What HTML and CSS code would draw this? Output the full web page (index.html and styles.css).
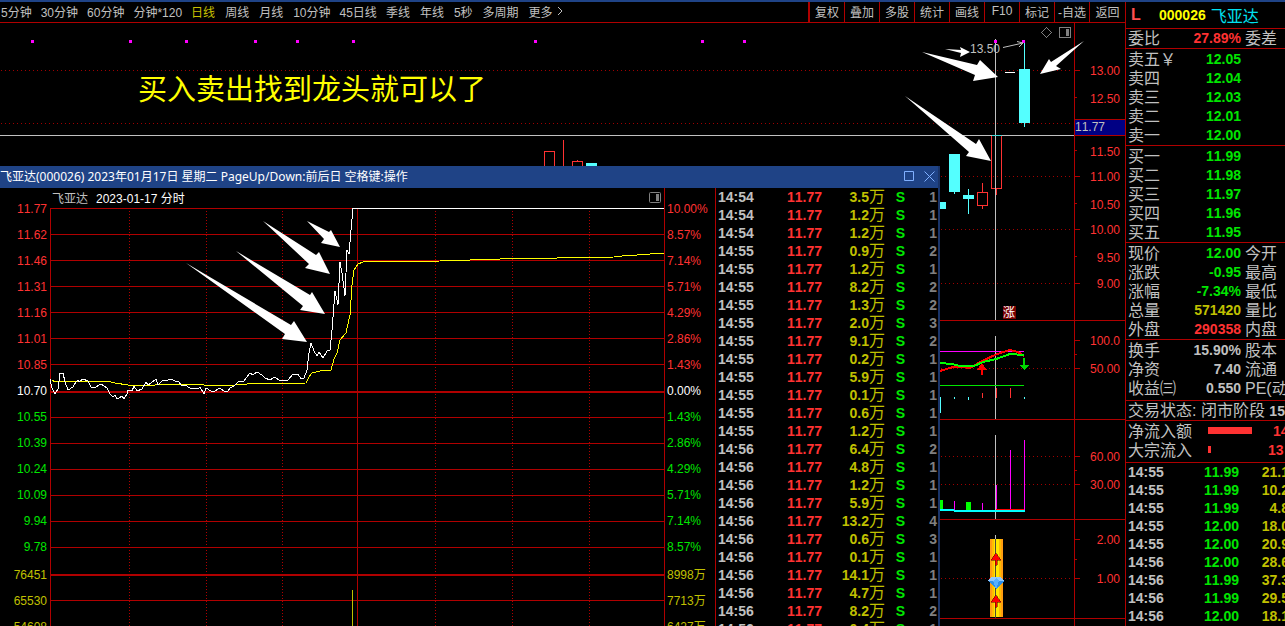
FILE: index.html
```html
<!DOCTYPE html>
<html lang="zh-CN">
<head>
<meta charset="utf-8">
<title>飞亚达 000026</title>
<link rel="stylesheet" href="styles.css">
</head>
<body>
<div class="app">
<main class="main">
  <nav class="toolbar">
    <div class="periods">
      <button class="tab wide">5分钟</button><button class="tab wide">30分钟</button><button class="tab wide">60分钟</button><button class="tab wide">分钟*120</button><button class="tab active">日线</button><button class="tab">周线</button><button class="tab">月线</button><button class="tab wide">10分钟</button><button class="tab wide">45日线</button><button class="tab">季线</button><button class="tab">年线</button><button class="tab">5秒</button><button class="tab">多周期</button><button class="tab more">更多<svg width="6" height="10" viewBox="0 0 6 10"><path d="M1 1l4 4-4 4" fill="none" stroke="#c0c0c0"/></svg></button>
    </div>
    <div class="tools">
      <button>复权</button><button>叠加</button><button>多股</button><button>统计</button><button>画线</button><button>F10</button><button>标记</button><button>-自选</button><button>返回</button>
    </div>
  </nav>
  <section class="stage">
    <svg class="kline" viewBox="0 23 1125 603" preserveAspectRatio="xMaxYMin slice">
      <g class="dots">
        <path d="M1 70.5H1072M1 123.5H1072M1 176.5H1072M1 229.5H1072M1 283.5H1072M1 368.5H1072M1 456.5H1072M1 484.5H1072M1 578.5H1072"/>
      </g>
      <path class="grid" d="M1074.5 23V626M940 320.5H1125M940 419.5H1125M940 519.5H1125M940 618.5H1125M1075 70.5h5M1075 97.5h2M1075 150.5h2M1075 176.5h5M1075 203.5h2M1075 229.5h5M1075 256.5h2M1075 283.5h5M1075 340.5h5M1075 354.5h2M1075 368.5h5M1075 456.5h5M1075 470.5h2M1075 484.5h5M1075 539.5h5M1075 559.5h2M1075 578.5h5"/>
      <path class="mark" d="M31 40h3v3h-3zM129 40h3v3h-3zM185 40h3v3h-3zM254 40h3v3h-3zM296 40h3v3h-3zM352 40h3v3h-3zM534 40h3v3h-3zM701 40h3v3h-3zM743 40h3v3h-3z"/>
      <path class="up" d="M544.5 167V151.5h10V167M563.5 140V167M572.5 167V161.5h10V167M577.5 160v1M982.5 183v9M977.5 192.5h10v13h-10zM982.5 206v3M991.5 136v52.500h10V136M996.5 189v6"/>
      <path class="down" d="M586 163h11v4h-11zM949 154h11v38h-11zM954 192h1v2h-1zM940 202h6v7h-6zM963 195h11v4h-11zM968 189h1v25h-1zM1019 69h11v54h-11zM1024 42h1v85h-1z"/>
      <text class="peak" x="970" y="53">13.50</text>
      <path class="cross" d="M0 135.500H1074M995.500 39V320M995.500 336V419M995.500 435V519M995.500 535V618"/>
      <path d="M992 135.500h10" stroke="#40d8d8"/>
      <path class="white" d="M1005 72.500h10"/>
      <path class="mark" d="M994 40h3v3h-3zM1022 40h3v3h-3z"/>
      <path class="pointer" d="M1003 47.500L1023 43M1017 41.500L1023 43 1019 47"/>
      <path d="M1046.500 27.500l5 5-5 5-5-5z" fill="none" stroke="#808080"/>
      <rect x="1059.500" y="27.500" width="11" height="10" rx="1" fill="none" stroke="#808080"/><path d="M1066 29h3v7h-3z" fill="#808080"/>
      <rect x="1075" y="119" width="50" height="17" fill="#000084"/>
      <path class="grid" d="M1075 119.500h50M1075 135.500h50"/>
      <g class="ticks">
        <text x="1120" y="75">13.00</text><text x="1120" y="103">12.50</text><text x="1120" y="156">11.50</text><text x="1120" y="181">11.00</text><text x="1120" y="209">10.50</text><text x="1120" y="234">10.00</text><text x="1120" y="262">9.50</text><text x="1120" y="288">9.00</text><text x="1120" y="345">100.0</text><text x="1120" y="373">50.00</text><text x="1120" y="461">60.00</text><text x="1120" y="489">30.00</text><text x="1120" y="544">2.00</text><text x="1120" y="583">1.00</text>
      </g>
      <text class="peak" x="1075" y="131">11.77</text>
      <g class="arrows">
        <path d="M922 52L977 65 980 60 998 77 973 81 975 75z"/>
        <path d="M945 49L961 50 960 47 970 52 960 57 961 53z"/>
        <path d="M1040 74L1049 59 1051 62 1084 41 1056 66 1061 69z"/>
        <path d="M905 96L976 144 979 139 991 161 966 156 969 152z"/>
      </g>
      <rect x="1003" y="306" width="13" height="13" fill="#780000"/>
      <text class="badge" x="1009" y="317">涨</text>
      <path d="M940 351.500h84" stroke="#f0f"/><path d="M940 385.500h84" stroke="#00e600"/>
      <path class="thick" stroke="#f00" d="M940 371L953 367 962 367 970 368 982 361 995 355 1003 352 1010 350 1018 352 1024 356"/>
      <path class="thick" stroke="#0f0" d="M940 363L952 364 960 366 974 366 983 362 996 359 1010 354 1024 355"/>
      <path fill="#f00" d="M982 363l5 7h-4v5h-2v-5h-4z"/>
      <path fill="#00d800" d="M1023 358h2v7h4l-5 5-5-5h4z"/>
      <path stroke="#54ffff" d="M940.500 397v16M954.500 397v2M968.500 397v3M1024.500 397v2"/>
      <path class="up" d="M982.500 393v5M996.500 388v10M1010.500 388v10"/>
      <path fill="#0f0" d="M940 500h3v11h-3zM966 502h5v8h-5z"/>
      <path stroke="#f0f" d="M954.500 501v9M982.500 503v7M996.500 485v25M1010.500 450v60M1024.500 440v70"/>
      <path stroke="#f00" d="M996 509.500h28"/>
      <path fill="#0ff" d="M940 509h14v1h71v2h-71v-1h-14z"/>
      <rect x="990" y="539" width="13" height="78" fill="#ff9c10"/><rect x="992" y="539" width="9" height="78" fill="#ffbc00"/><rect x="994" y="539" width="5" height="78" fill="#ffe800"/>
      <path class="cross" d="M995.500 535V539"/><path d="M995.500 539V618" stroke="#504838"/>
      <path fill="#f00" stroke="#400" stroke-width=".500" d="M996 553l5 7h-4v5h-2v-5h-4zM996 595l5 7h-4v5h-2v-5h-4z"/>
      <path d="M991 577h10l3 4-8 8-8-8z" fill="#2f8fe8"/><path d="M991 577h10l3 4h-16z" fill="#8fc8ff"/><path d="M993 581l3 8 3-8-3-3z" fill="#58b0ff"/>
    </svg>
    <p class="slogan">买入卖出找到龙头就可以了</p>
    <section class="dialog">
      <header class="dialog-bar">
        <h1>飞亚达(000026) 2023年01月17日 星期二 PageUp/Down:前后日 空格键:操作</h1>
        <button aria-label="最大化"><svg width="11" height="11" viewBox="0 0 11 11"><path d="M.5 .5h9v9h-9z" fill="none" stroke="#80b0ff"/></svg></button>
        <button aria-label="关闭"><svg width="11" height="11" viewBox="0 0 11 11"><path d="M.5 .5l10 10M10.500 .5l-10 10" fill="none" stroke="#80b0ff"/></svg></button>
      </header>
      <div class="dialog-body">
        <div class="scale left">
          <span>11.77</span><span>11.62</span><span>11.46</span><span>11.31</span><span>11.16</span><span>11.01</span><span>10.85</span><span class="zero">10.70</span><span class="neg">10.55</span><span class="neg">10.39</span><span class="neg">10.24</span><span class="neg">10.09</span><span class="neg">9.94</span><span class="neg">9.78</span><span class="vol first">76451</span><span class="vol">65530</span><span class="vol">54608</span>
        </div>
        <div class="plot">
          <div class="plot-head"><span class="name">飞亚达</span><span>2023-01-17 分时</span><svg width="12" height="11" viewBox="0 0 12 11"><rect x=".5" y=".5" width="11" height="10" rx="1" fill="none" stroke="#808080"/><path d="M7 2h3v7h-3z" fill="#808080"/></svg></div>
          <svg class="intraday" viewBox="50 208 614 418" preserveAspectRatio="xMinYMin slice">
            <path class="vdots" d="M129.500 211V626M206.500 211V626M282.500 211V626M435.500 211V626M512.500 211V626M589.500 211V626"/>
            <path class="grid" d="M50.500 208V626M357.500 208V626M50 208.500H664M50 234.500H664M50 260.500H664M50 286.500H664M50 312.500H664M50 338.500H664M50 364.500H664M50 391.500H664M50 392.500H664M50 417.500H664M50 443.500H664M50 469.500H664M50 495.500H664M50 521.500H664M50 547.500H664M50 574.500H664M50 575.500H664M50 600.500H664"/>
            <path class="line avg" d="M52 380L55 382 62 381 107 381 115 383 128 385 155 385 165 384 200 384 204 385 235 385 247 384 306 383 309 377 312 373 320 371 331 370 334 359 337 353 340 340 346 333 350 315 352 285 354 270 358 264 363 262 440 261 500 259 614 257 622 256 637 255 664 253"/>
            <path class="line price" d="M50 379L52 388 55 394 58 389 60 373 63 373 65 382 68 390 73 387 76 382 78 380 79 382 83 379 88 381 91 387 96 387 101 384 107 388 110 394 113 397 115 395 117 399 119 398 122 396 124 399 127 394 128 390 132 391 134 386 137 391 142 389 146 382 148 385 151 383 156 379 158 385 163 380 168 380 171 379 175 381 178 381 182 386 185 385 190 388 195 388 198 389 200 387 204 394 206 388 211 391 215 391 220 388 224 391 228 391 230 388 234 386 238 382 244 381 250 373 253 375 257 372 262 375 265 378 270 380 275 377 279 380 288 380 293 374 298 374 301 379 304 378 307 370 309 353 311 343 314 351 317 356 319 352 323 358 327 351 330 350 332 330 335 291 338 305 340 262 342 273 345 296 347 250 349 254 351 230 353 208.500H664"/>
            <path d="M352.500 590V626" stroke="#c0c000"/>
            <g class="arrows">
              <path d="M263 221L316 255 319 252 330 274 305 268 309 264z"/>
              <path d="M307 221L329 232 331 230 340 247 321 243 324 239z"/>
              <path d="M236 251L310 295 312 292 325 314 300 310 303 306z"/>
              <path d="M186 263L291 325 294 321 307 342 282 339 285 334z"/>
            </g>
          </svg>
        </div>
        <div class="scale right">
          <span>10.00%</span><span>8.57%</span><span>7.14%</span><span>5.71%</span><span>4.29%</span><span>2.86%</span><span>1.43%</span><span class="zero">0.00%</span><span class="neg">1.43%</span><span class="neg">2.86%</span><span class="neg">4.29%</span><span class="neg">5.71%</span><span class="neg">7.14%</span><span class="neg">8.57%</span><span class="vol first">8998万</span><span class="vol">7713万</span><span class="vol">6427万</span>
        </div>
        <div class="deals">
        <table>
          <tr><td>14:54</td><td>11.77</td><td>3.5<i>万</i></td><td>S</td><td>1</td></tr>
          <tr><td>14:54</td><td>11.77</td><td>1.2<i>万</i></td><td>S</td><td>1</td></tr>
          <tr><td>14:54</td><td>11.77</td><td>1.2<i>万</i></td><td>S</td><td>1</td></tr>
          <tr><td>14:55</td><td>11.77</td><td>0.9<i>万</i></td><td>S</td><td>2</td></tr>
          <tr><td>14:55</td><td>11.77</td><td>1.2<i>万</i></td><td>S</td><td>1</td></tr>
          <tr><td>14:55</td><td>11.77</td><td>8.2<i>万</i></td><td>S</td><td>2</td></tr>
          <tr><td>14:55</td><td>11.77</td><td>1.3<i>万</i></td><td>S</td><td>2</td></tr>
          <tr><td>14:55</td><td>11.77</td><td>2.0<i>万</i></td><td>S</td><td>3</td></tr>
          <tr><td>14:55</td><td>11.77</td><td>9.1<i>万</i></td><td>S</td><td>2</td></tr>
          <tr><td>14:55</td><td>11.77</td><td>0.2<i>万</i></td><td>S</td><td>1</td></tr>
          <tr><td>14:55</td><td>11.77</td><td>5.9<i>万</i></td><td>S</td><td>1</td></tr>
          <tr><td>14:55</td><td>11.77</td><td>0.1<i>万</i></td><td>S</td><td>1</td></tr>
          <tr><td>14:55</td><td>11.77</td><td>0.6<i>万</i></td><td>S</td><td>1</td></tr>
          <tr><td>14:55</td><td>11.77</td><td>1.2<i>万</i></td><td>S</td><td>1</td></tr>
          <tr><td>14:56</td><td>11.77</td><td>6.4<i>万</i></td><td>S</td><td>2</td></tr>
          <tr><td>14:56</td><td>11.77</td><td>4.8<i>万</i></td><td>S</td><td>1</td></tr>
          <tr><td>14:56</td><td>11.77</td><td>1.2<i>万</i></td><td>S</td><td>1</td></tr>
          <tr><td>14:56</td><td>11.77</td><td>5.9<i>万</i></td><td>S</td><td>1</td></tr>
          <tr><td>14:56</td><td>11.77</td><td>13.2<i>万</i></td><td>S</td><td>4</td></tr>
          <tr><td>14:56</td><td>11.77</td><td>0.6<i>万</i></td><td>S</td><td>3</td></tr>
          <tr><td>14:56</td><td>11.77</td><td>0.1<i>万</i></td><td>S</td><td>1</td></tr>
          <tr><td>14:56</td><td>11.77</td><td>14.1<i>万</i></td><td>S</td><td>1</td></tr>
          <tr><td>14:56</td><td>11.77</td><td>4.7<i>万</i></td><td>S</td><td>1</td></tr>
          <tr><td>14:56</td><td>11.77</td><td>8.2<i>万</i></td><td>S</td><td>2</td></tr>
          <tr><td>14:56</td><td>11.77</td><td>0.4<i>万</i></td><td>S</td><td>1</td></tr>
        </table>
        </div>
      </div>
    </section>
  </section>
</main>
<aside class="quote">
  <header class="stock"><b class="flag">L</b><b class="code">000026</b><span>飞亚达</span></header>
  <div class="block"><div class="row"><span>委比</span><b class="red">27.89%</b><span>委差</span></div></div>
  <div class="block book">
    <div class="row"><span>卖五￥</span><b>12.05</b></div>
    <div class="row"><span>卖四</span><b>12.04</b></div>
    <div class="row"><span>卖三</span><b>12.03</b></div>
    <div class="row"><span>卖二</span><b>12.01</b></div>
    <div class="row"><span>卖一</span><b>12.00</b></div>
  </div>
  <div class="block book">
    <div class="row"><span>买一</span><b>11.99</b></div>
    <div class="row"><span>买二</span><b>11.98</b></div>
    <div class="row"><span>买三</span><b>11.97</b></div>
    <div class="row"><span>买四</span><b>11.96</b></div>
    <div class="row"><span>买五</span><b>11.95</b></div>
  </div>
  <div class="block book">
    <div class="row"><span>现价</span><b>12.00</b><span>今开</span></div>
    <div class="row"><span>涨跌</span><b>-0.95</b><span>最高</span></div>
    <div class="row"><span>涨幅</span><b>-7.34%</b><span>最低</span></div>
    <div class="row"><span>总量</span><b class="yellow">571420</b><span>量比</span></div>
    <div class="row"><span>外盘</span><b class="red">290358</b><span>内盘</span></div>
  </div>
  <div class="block facts">
    <div class="row"><span>换手</span><b class="gray">15.90%</b><span>股本</span></div>
    <div class="row"><span>净资</span><b class="gray">7.40</b><span>流通</span></div>
    <div class="row"><span>收益㈢</span><b class="gray">0.550</b><span>PE(动)</span></div>
  </div>
  <div class="block"><div class="status">交易状态: 闭市阶段 <b>15:00</b></div></div>
  <div class="block flow">
    <div class="flow-row"><span>净流入额</span><span class="bar" style="width:44px"></span><b class="short">14</b></div>
    <div class="flow-row"><span>大宗流入</span><span class="bar" style="width:3px"></span><b>13</b></div>
  </div>
  <div class="ticks-list">
    <div><b>14:55</b><b>11.99</b><b>21.1万</b></div>
    <div><b>14:55</b><b>11.99</b><b>10.2万</b></div>
    <div><b>14:55</b><b>11.99</b><b>4.8万</b></div>
    <div><b>14:55</b><b>12.00</b><b>18.0万</b></div>
    <div><b>14:55</b><b>12.00</b><b>20.9万</b></div>
    <div><b>14:56</b><b>12.00</b><b>28.6万</b></div>
    <div><b>14:56</b><b>11.99</b><b>37.3万</b></div>
    <div><b>14:56</b><b>11.99</b><b>29.5万</b></div>
    <div><b>14:56</b><b>12.00</b><b>18.1万</b></div>
  </div>
</aside>
</div>
</body>
</html>
```
FILE: styles.css
```css
* { box-sizing: border-box; }
html, body { height: 100%; }
body {
  margin: 0;
  background: #000;
  color: #c0c0c0;
  font-family: "Liberation Sans", "Noto Sans CJK SC", sans-serif;
  font-size: 12px;
  font-weight: 400;
  font-kerning: none;
  overflow: hidden;
}
button {
  padding: 0;
  border: 0;
  background: none;
  color: inherit;
  font: inherit;
  white-space: nowrap;
  cursor: pointer;
}
b { font-weight: 700; }
.app { display: flex; height: 100%; border-top: 2px solid #1f4386; }
.main { flex: 1; min-width: 0; display: flex; flex-direction: column; }

.toolbar { display: flex; justify-content: space-between; height: 21px; border-bottom: 1px solid #b00000; }
.periods { display: flex; padding-left: 1px; }
.tab { padding: 0 5px 2px; }
.tab.wide { padding: 0 4px 2px 5px; }
.tab:first-child { padding-left: 0; }
.tab.active { color: #c8c000; }
.tab.more { display: flex; align-items: center; gap: 4px; }
.tools { display: flex; border-left: 2px solid #b00000; }
.tools button { width: 35px; padding-bottom: 2px; border-right: 1px solid #b00000; }
.tools button:last-child { border-right: 0; }

.stage { position: relative; flex: 1; min-height: 0; overflow: hidden; }
.kline { display: block; width: 100%; height: 100%; shape-rendering: crispEdges; }
.grid { fill: none; stroke: #b00000; }
.dots, .vdots { fill: none; stroke: #a00000; stroke-dasharray: 1 3; }
.vdots { stroke: #b00000; stroke-dasharray: 1 2; }
.mark { fill: #f0f; }
.up { fill: none; stroke: #ff3232; }
.down { fill: #54ffff; }
.cross { fill: none; stroke: #c0c0c0; }
.white { stroke: #fff; }
.pointer { fill: none; stroke: #c0c0c0; shape-rendering: auto; }
.peak { fill: #c0c0c0; }
.ticks { fill: #ff3232; text-anchor: end; }
.arrows { fill: #fff; shape-rendering: auto; }
.badge { fill: #fff; font-size: 12px; text-anchor: middle; }
.thick { fill: none; stroke-width: 2; }
.slogan {
  position: absolute;
  left: 138px;
  top: 47px;
  margin: 0;
  color: #ff0;
  font-size: 29px;
  line-height: 40px;
  white-space: nowrap;
}

.dialog {
  position: absolute;
  left: 0;
  right: 185px;
  top: 143px;
  bottom: 0;
  display: flex;
  flex-direction: column;
  border-right: 2px solid #1a3468;
  background: #000;
  overflow: hidden;
}
.dialog-bar { display: flex; align-items: center; gap: 9px; height: 22px; flex: none; padding-right: 3px; background: #1f4386; }
.dialog-bar h1 {
  flex: 1;
  margin: 0;
  color: #fff;
  font-family: "Noto Sans", "Noto Sans CJK SC", sans-serif;
  font-size: 12px;
  font-weight: 400;
  line-height: 20px;
  white-space: nowrap;
}
.dialog-bar button { display: flex; padding-bottom: 2px; }
.dialog-body { flex: 1; min-height: 0; display: flex; }
.scale { display: flex; flex-direction: column; padding-top: 8px; color: #ff3232; line-height: 26px; }
.scale span { flex: none; height: 26px; }
.scale.left { width: 50px; padding-right: 3px; text-align: right; }
.scale.right { width: 52px; padding-left: 2px; border: solid #b00000; border-width: 0 1px; }
.scale .zero { color: #fff; }
.scale .neg { color: #00e600; }
.scale .vol { color: #c0c000; }
.scale .first { margin-top: 2px; }
.plot { flex: 1; min-width: 0; display: flex; flex-direction: column; }
.plot-head { display: flex; align-items: center; gap: 8px; height: 20px; flex: none; padding: 0 3px 2px 2px; color: #fff; }
.plot-head .name { color: #c0c0c0; }
.plot-head svg { margin-left: auto; }
.intraday { flex: 1; min-height: 0; width: 100%; shape-rendering: crispEdges; }
.line { fill: none; }
.avg { stroke: #ff0; }
.price { stroke: #fff; }

.deals { width: 222px; overflow: hidden; padding-left: 2px; }
.deals table { width: 219px; border-collapse: collapse; table-layout: fixed; font-size: 14px; font-weight: 700; }
.deals td { height: 18px; padding: 0; line-height: 18px; text-align: right; color: #808080; }
.deals td:nth-child(1) { width: 42px; text-align: left; color: #c0c0c0; }
.deals td:nth-child(2) { width: 62px; color: #ff3232; }
.deals td:nth-child(3) { width: 63px; color: #c0c000; }
.deals td:nth-child(4) { width: 20px; color: #00e600; }
.deals i { font-size: 16px; line-height: 16px; font-style: normal; font-weight: 400; }

.quote { flex: none; width: 160px; border-left: 1px solid #b00000; overflow: hidden; font-size: 16px; white-space: nowrap; }
.quote b { font-size: 14px; }
.stock { display: flex; align-items: center; height: 27px; padding-left: 5px; border-bottom: 1px solid #b00000; color: #00e0f0; }
.quote .flag { width: 28px; color: #ff5050; font-size: 16px; }
.stock .code { margin-right: 5px; color: #ff0; }
.block { padding-left: 2px; border-bottom: 1px solid #b00000; }
.book { padding-top: 1px; }
.facts { padding-top: 1px; padding-bottom: 2px; }
.row { display: grid; grid-template-columns: 50px 63px 60px; align-items: center; height: 19px; line-height: 19px; }
.row b { color: #00e600; text-align: right; }
.row span:last-child { padding-left: 4px; }
.row .red { color: #ff3232; }
.row .yellow { color: #c0c000; }
.row .gray { color: #c0c0c0; }
.status { height: 19px; line-height: 19px; }
.flow { padding-top: 1px; padding-bottom: 2px; }
.flow-row { display: grid; grid-template-columns: 80px 60px 20px; align-items: center; height: 19px; line-height: 19px; }
.flow-row b { color: #ff3232; }
.flow-row .short { padding-left: 5px; }
.bar { height: 7px; margin-bottom: 2px; background: #ff3232; }
.ticks-list { padding-left: 2px; }
.ticks-list div { display: grid; grid-template-columns: 50px 61px 64px; height: 18px; line-height: 18px; }
.ticks-list b:nth-child(2) { color: #00e600; text-align: right; }
.ticks-list b:nth-child(3) { color: #c0c000; text-align: right; }
```
